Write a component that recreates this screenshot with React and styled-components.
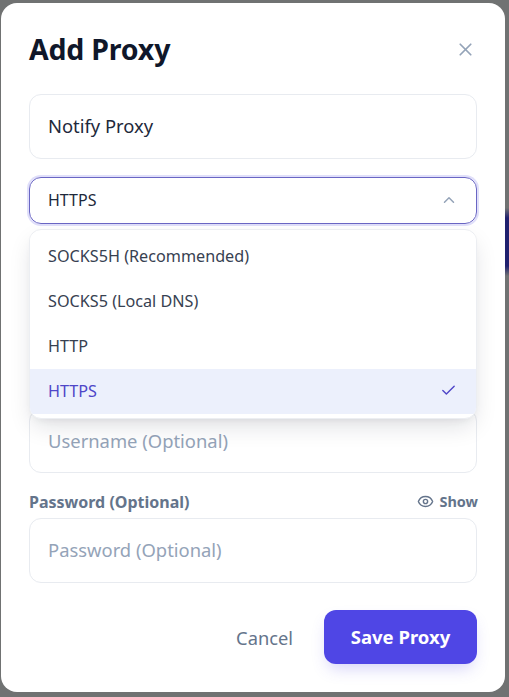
import React from "react";
import styled, { createGlobalStyle } from "styled-components";
import { X, ChevronUp, Check, Eye } from "lucide-react";

const Global = createGlobalStyle`
  html, body { margin: 0; padding: 0; }
  body { font-family: "Noto Sans", "Open Sans", sans-serif; background: #707272; }
  * { box-sizing: border-box; }
`;

const Backdrop = styled.div`
  width: 509px;
  height: 697px;
  padding: 3px 4px 5px 1px;
  background:
    linear-gradient(to bottom, transparent 208px, #20206e 218px, #20206e 266px, transparent 276px) right top / 4px 100% no-repeat,
    #707272;
  overflow: hidden;
`;

const Modal = styled.div`
  width: 504px;
  height: 689px;
  background: #fff;
  border-radius: 16px;
  padding: 28px;
  display: flex;
  flex-direction: column;
`;

const Header = styled.div`
  display: flex;
  align-items: center;
  justify-content: space-between;
  height: 36px;
  margin-bottom: 27px;
  padding-right: 1px;
`;

const Title = styled.h2`
  margin: 0;
  font-size: 28.5px;
  font-weight: 700;
  color: #0f172a;
  letter-spacing: -0.2px;
`;

const Close = styled.button`
  border: 0;
  background: none;
  padding: 0;
  display: flex;
  color: #94a3b8;
`;

const Field = styled.div`
  height: 65px;
  border: 1px solid #e8ebf0;
  border-radius: 12px;
  display: flex;
  align-items: center;
  padding: 0 18px 2px;
  font-size: 18.4px;
  color: ${(p) => (p.$placeholder ? "#94a3b8" : "#1e293b")};
  background: #fff;
`;

const SelectWrap = styled.div`
  position: relative;
  margin-top: 18px;
  height: 163px;
`;

const Select = styled.div`
  height: 47px;
  border: 1px solid #6a66c4;
  box-shadow: 0 0 0 2px #e0dffa;
  border-radius: 12px;
  display: flex;
  align-items: center;
  justify-content: space-between;
  padding: 0 18px 2px;
  font-size: 16px;
  color: #1e293b;
`;

const Chevron = styled.span`
  display: flex;
  color: #94a3b8;
  margin-right: 0;
`;

const Menu = styled.div`
  position: absolute;
  left: 0;
  right: 0;
  top: 52px;
  z-index: 2;
  padding: 4px 0;
  background: #fff;
  border: 1px solid #eceef2;
  border-radius: 12px;
  overflow: hidden;
  box-shadow: 0 10px 24px -4px rgba(15, 23, 42, 0.14), 0 4px 8px -4px rgba(15, 23, 42, 0.08);
`;

const Option = styled.div`
  height: 45px;
  display: flex;
  align-items: center;
  justify-content: space-between;
  padding: 0 19px 2px 18px;
  font-size: 16.2px;
  color: ${(p) => (p.$active ? "#4f46c8" : "#374151")};
  background: ${(p) => (p.$active ? "#ecf0fc" : "#fff")};
`;

const UserField = styled(Field)`
  margin-top: 69px;
  height: 64px;
`;

const LabelRow = styled.div`
  margin-top: 19px;
  height: 20px;
  display: flex;
  align-items: center;
  justify-content: space-between;
  margin-bottom: 6px;
`;

const Label = styled.label`
  font-size: 16px;
  font-weight: 700;
  color: #64748b;
`;

const Show = styled.span`
  display: flex;
  align-items: center;
  gap: 5px;
  font-size: 14.5px;
  font-weight: 700;
  color: #64748b;
  margin-right: -1px;
  padding-bottom: 2px;
`;

const Footer = styled.div`
  margin-top: 27px;
  display: flex;
  justify-content: flex-end;
  align-items: center;
  gap: 31px;
`;

const Cancel = styled.button`
  border: 0;
  background: none;
  padding: 0;
  font: inherit;
  font-size: 18.3px;
  color: #64748b;
`;

const Save = styled.button`
  border: 0;
  width: 153px;
  height: 54px;
  border-radius: 12px;
  padding: 0 0 2px;
  background: #4f46e5;
  color: #fff;
  font: inherit;
  font-size: 18.5px;
  font-weight: 700;
  box-shadow: 0 8px 16px -4px rgba(79, 70, 229, 0.25);
`;

export default function App() {
  return (
    <Backdrop>
      <Global />
      <Modal>
        <Header>
          <Title>Add Proxy</Title>
          <Close aria-label="Close"><X size={21} strokeWidth={2} /></Close>
        </Header>
        <Field>Notify Proxy</Field>
        <SelectWrap>
          <Select>
            HTTPS
            <Chevron><ChevronUp size={18} /></Chevron>
          </Select>
          <Menu>
            <Option>SOCKS5H (Recommended)</Option>
            <Option>SOCKS5 (Local DNS)</Option>
            <Option>HTTP</Option>
            <Option $active>
              HTTPS
              <Check size={17} />
            </Option>
          </Menu>
        </SelectWrap>
        <UserField $placeholder>Username (Optional)</UserField>
        <LabelRow>
          <Label>Password (Optional)</Label>
          <Show><Eye size={17} />Show</Show>
        </LabelRow>
        <Field $placeholder>Password (Optional)</Field>
        <Footer>
          <Cancel>Cancel</Cancel>
          <Save>Save Proxy</Save>
        </Footer>
      </Modal>
    </Backdrop>
  );
}
